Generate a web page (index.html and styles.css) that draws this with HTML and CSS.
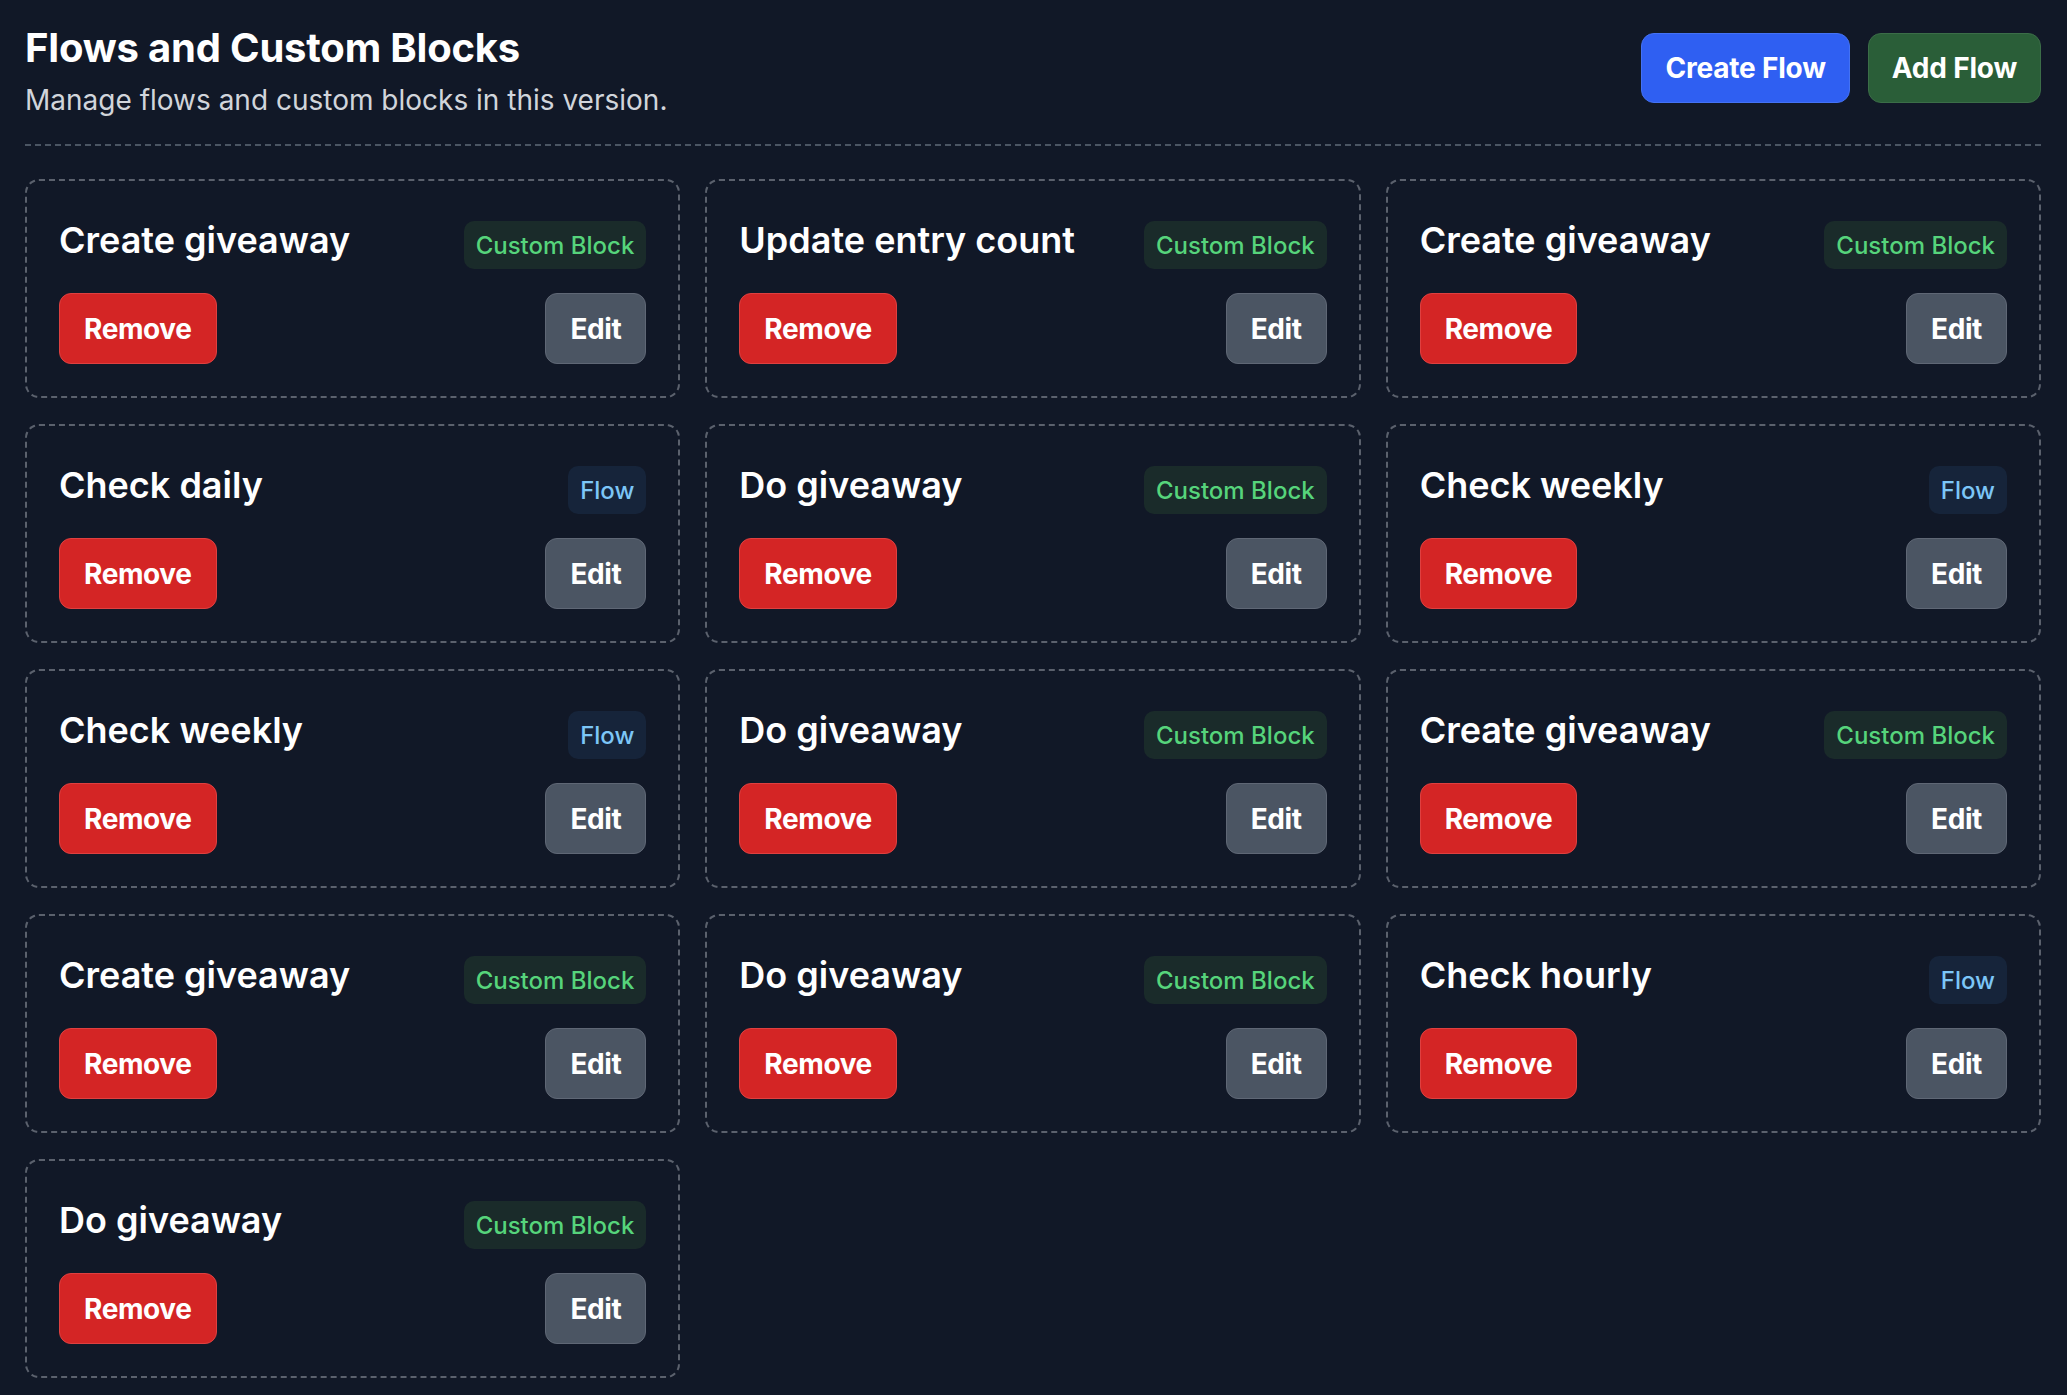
FILE: index.html
```html
<!DOCTYPE html>
<html lang="en">
<head>
<meta charset="utf-8">
<title>Flows and Custom Blocks</title>
<link rel="stylesheet" href="styles.css">
</head>
<body>
<div class="page">
  <header class="header">
    <div class="heading">
      <h1 class="title">Flows and Custom Blocks</h1>
      <p class="subtitle">Manage flows and custom blocks in this version.</p>
    </div>
    <div class="actions">
      <button class="btn btn-blue">Create Flow</button>
      <button class="btn btn-green">Add Flow</button>
    </div>
  </header>
  <main class="grid">
    <div class="card"><div class="card-head"><h2 class="card-title">Create giveaway</h2><span class="badge badge-block">Custom Block</span></div><div class="card-actions"><button class="btn btn-red">Remove</button><button class="btn btn-gray">Edit</button></div></div>
    <div class="card"><div class="card-head"><h2 class="card-title">Update entry count</h2><span class="badge badge-block">Custom Block</span></div><div class="card-actions"><button class="btn btn-red">Remove</button><button class="btn btn-gray">Edit</button></div></div>
    <div class="card"><div class="card-head"><h2 class="card-title">Create giveaway</h2><span class="badge badge-block">Custom Block</span></div><div class="card-actions"><button class="btn btn-red">Remove</button><button class="btn btn-gray">Edit</button></div></div>
    <div class="card"><div class="card-head"><h2 class="card-title">Check daily</h2><span class="badge badge-flow">Flow</span></div><div class="card-actions"><button class="btn btn-red">Remove</button><button class="btn btn-gray">Edit</button></div></div>
    <div class="card"><div class="card-head"><h2 class="card-title">Do giveaway</h2><span class="badge badge-block">Custom Block</span></div><div class="card-actions"><button class="btn btn-red">Remove</button><button class="btn btn-gray">Edit</button></div></div>
    <div class="card"><div class="card-head"><h2 class="card-title">Check weekly</h2><span class="badge badge-flow">Flow</span></div><div class="card-actions"><button class="btn btn-red">Remove</button><button class="btn btn-gray">Edit</button></div></div>
    <div class="card"><div class="card-head"><h2 class="card-title">Check weekly</h2><span class="badge badge-flow">Flow</span></div><div class="card-actions"><button class="btn btn-red">Remove</button><button class="btn btn-gray">Edit</button></div></div>
    <div class="card"><div class="card-head"><h2 class="card-title">Do giveaway</h2><span class="badge badge-block">Custom Block</span></div><div class="card-actions"><button class="btn btn-red">Remove</button><button class="btn btn-gray">Edit</button></div></div>
    <div class="card"><div class="card-head"><h2 class="card-title">Create giveaway</h2><span class="badge badge-block">Custom Block</span></div><div class="card-actions"><button class="btn btn-red">Remove</button><button class="btn btn-gray">Edit</button></div></div>
    <div class="card"><div class="card-head"><h2 class="card-title">Create giveaway</h2><span class="badge badge-block">Custom Block</span></div><div class="card-actions"><button class="btn btn-red">Remove</button><button class="btn btn-gray">Edit</button></div></div>
    <div class="card"><div class="card-head"><h2 class="card-title">Do giveaway</h2><span class="badge badge-block">Custom Block</span></div><div class="card-actions"><button class="btn btn-red">Remove</button><button class="btn btn-gray">Edit</button></div></div>
    <div class="card"><div class="card-head"><h2 class="card-title">Check hourly</h2><span class="badge badge-flow">Flow</span></div><div class="card-actions"><button class="btn btn-red">Remove</button><button class="btn btn-gray">Edit</button></div></div>
    <div class="card"><div class="card-head"><h2 class="card-title">Do giveaway</h2><span class="badge badge-block">Custom Block</span></div><div class="card-actions"><button class="btn btn-red">Remove</button><button class="btn btn-gray">Edit</button></div></div>
  </main>
</div>
</body>
</html>
```
FILE: styles.css
```css
* { box-sizing: border-box; }
html, body {
  margin: 0;
  padding: 0;
  background: #111827;
  color: #ffffff;
  font-family: Inter, "Noto Sans", "Liberation Sans", sans-serif;
}
.page {
  padding: 23px 26px 30px 25px;
}
.header {
  display: flex;
  justify-content: space-between;
  align-items: flex-start;
  padding-bottom: 24px;
  border-bottom: 2px dashed #4b5563;
}
.title {
  margin: 0;
  font-size: 40px;
  line-height: 49px;
  font-weight: 700;
  letter-spacing: -0.2px;
}
.subtitle {
  margin: 8px 0 0 0;
  font-size: 28px;
  line-height: 40px;
  color: #d1d5db;
  font-weight: 400;
}
.actions {
  display: flex;
  gap: 18px;
  margin-top: 10px;
}
.btn {
  font-family: Inter, "Noto Sans", "Liberation Sans", sans-serif;
  font-weight: 700;
  color: #ffffff;
  border-radius: 13px;
  border: 1px solid transparent;
  padding: 0 23px;
  cursor: pointer;
  letter-spacing: -0.2px;
}
.btn-blue {
  height: 70px;
  font-size: 28px;
  background: #2f5ff2;
  border-color: #4472f4;
}
.btn-green {
  height: 70px;
  font-size: 28px;
  background: #2a5e38;
  border-color: #3b6d48;
}
.grid {
  display: grid;
  grid-template-columns: repeat(3, 1fr);
  column-gap: 25px;
  row-gap: 26px;
  margin-top: 33px;
}
.card {
  border: 2px dashed #5b616d;
  border-radius: 14px;
  padding: 36px 32px 32px 32px;
  height: 219px;
}
.card-head {
  display: flex;
  justify-content: space-between;
  align-items: flex-start;
  height: 52px;
}
.card-title {
  margin: 0;
  font-size: 36px;
  line-height: 46px;
  font-weight: 600;
}
.badge {
  margin-top: 4px;
  height: 48px;
  display: inline-flex;
  align-items: center;
  padding: 0 12px;
  border-radius: 10px;
  font-size: 24px;
  font-weight: 500;
}
.badge-block {
  background: #1a2b2a;
  color: #56d47b;
}
.badge-flow {
  background: #16243a;
  color: #7cc6f7;
}
.card-actions {
  display: flex;
  justify-content: space-between;
  margin-top: 24px;
}
.btn-red {
  height: 71px;
  font-size: 28px;
  font-weight: 700;
  letter-spacing: -0.4px;
  padding: 0 24px;
  background: #d42525;
  border-color: #df4040;
  border-radius: 12px;
}
.btn-gray {
  height: 71px;
  font-size: 28px;
  font-weight: 700;
  letter-spacing: -0.4px;
  padding: 0 24px;
  background: #4b5563;
  border-color: #5f6775;
  border-radius: 12px;
}
```
